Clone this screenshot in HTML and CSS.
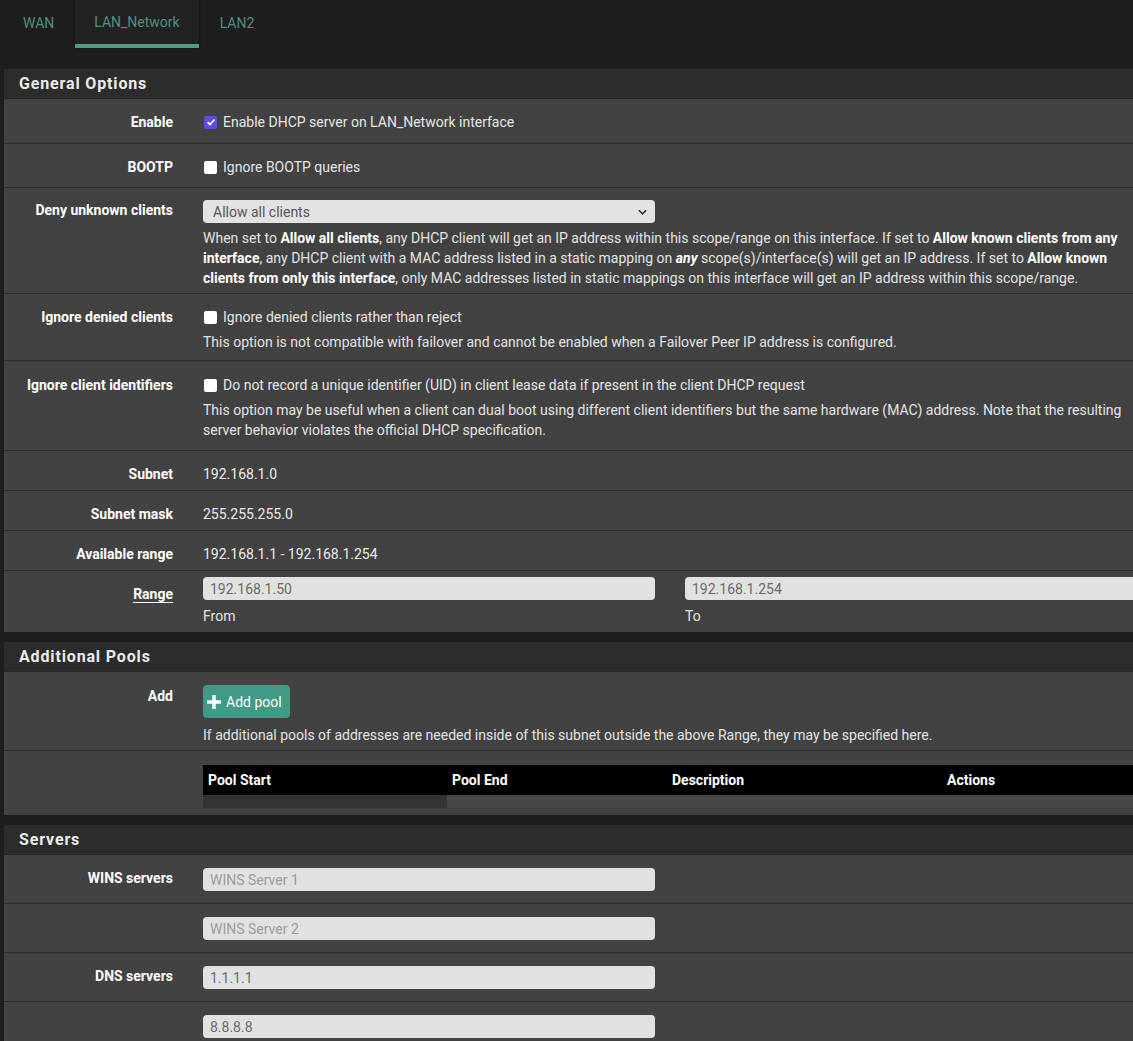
FILE: index.html
```html
<!DOCTYPE html>
<html lang="en">
<head>
<meta charset="utf-8">
<title>DHCP Server</title>
<link rel="stylesheet" href="styles.css">
</head>
<body>
<nav class="tabs">
  <a class="tab">WAN</a>
  <a class="tab active">LAN_Network</a>
  <a class="tab">LAN2</a>
</nav>

<section class="panel first">
  <h2 class="panel-heading">General Options</h2>
  <div class="panel-body">
    <div class="form-row r-enable">
      <div class="form-label">Enable</div>
      <div class="form-content">
        <label class="check"><input type="checkbox" class="cb" checked> Enable DHCP server on LAN_Network interface</label>
      </div>
    </div>
    <div class="form-row r-bootp">
      <div class="form-label">BOOTP</div>
      <div class="form-content">
        <label class="check"><input type="checkbox" class="cb"> Ignore BOOTP queries</label>
      </div>
    </div>
    <div class="form-row r-deny">
      <div class="form-label">Deny unknown clients</div>
      <div class="form-content">
        <select class="select"><option>Allow all clients</option></select>
        <p class="help">When set to <b>Allow all clients</b>, any DHCP client will get an IP address within this scope/range on this interface. If set to <b>Allow known clients from any interface</b>, any DHCP client with a MAC address listed in a static mapping on <b><i>any</i></b> scope(s)/interface(s) will get an IP address. If set to <b>Allow known clients from only this interface</b>, only MAC addresses listed in static mappings on this interface will get an IP address within this scope/range.</p>
      </div>
    </div>
    <div class="form-row r-ign">
      <div class="form-label">Ignore denied clients</div>
      <div class="form-content">
        <label class="check"><input type="checkbox" class="cb"> Ignore denied clients rather than reject</label>
        <p class="help">This option is not compatible with failover and cannot be enabled when a Failover Peer IP address is configured.</p>
      </div>
    </div>
    <div class="form-row r-uid">
      <div class="form-label">Ignore client identifiers</div>
      <div class="form-content">
        <label class="check"><input type="checkbox" class="cb"> Do not record a unique identifier (UID) in client lease data if present in the client DHCP request</label>
        <p class="help">This option may be useful when a client can dual boot using different client identifiers but the same hardware (MAC) address. Note that the resulting server behavior violates the official DHCP specification.</p>
      </div>
    </div>
    <div class="form-row r-static">
      <div class="form-label">Subnet</div>
      <div class="form-content"><span class="static">192.168.1.0</span></div>
    </div>
    <div class="form-row r-static">
      <div class="form-label">Subnet mask</div>
      <div class="form-content"><span class="static">255.255.255.0</span></div>
    </div>
    <div class="form-row r-static">
      <div class="form-label">Available range</div>
      <div class="form-content"><span class="static">192.168.1.1 - 192.168.1.254</span></div>
    </div>
    <div class="form-row r-range">
      <div class="form-label"><span class="underline">Range</span></div>
      <div class="form-content range">
        <div class="range-col">
          <input class="input" type="text" value="192.168.1.50">
          <span class="help sub">From</span>
        </div>
        <div class="range-col">
          <input class="input" type="text" value="192.168.1.254">
          <span class="help sub">To</span>
        </div>
      </div>
    </div>
  </div>
</section>

<section class="panel">
  <h2 class="panel-heading">Additional Pools</h2>
  <div class="panel-body">
    <div class="form-row r-add">
      <div class="form-label">Add</div>
      <div class="form-content">
        <button class="btn" type="button">
          <svg class="plus" width="14" height="14" viewBox="0 0 14 14" aria-hidden="true"><path d="M5.3 0h3.4v5.3H14v3.4H8.7V14H5.3V8.7H0V5.3h5.3z" fill="#fff"/></svg>
          Add pool
        </button>
        <p class="help">If additional pools of addresses are needed inside of this subnet outside the above Range, they may be specified here.</p>
      </div>
    </div>
    <div class="form-row r-table">
      <div class="form-label"></div>
      <div class="form-content">
        <div class="pool-table">
          <div class="th">Pool Start</div>
          <div class="th">Pool End</div>
          <div class="th">Description</div>
          <div class="th">Actions</div>
          <div class="td dark"></div>
          <div class="td"></div>
          <div class="td"></div>
          <div class="td"></div>
        </div>
      </div>
    </div>
  </div>
</section>

<section class="panel">
  <h2 class="panel-heading">Servers</h2>
  <div class="panel-body">
    <div class="form-row r-input">
      <div class="form-label">WINS servers</div>
      <div class="form-content"><input class="input" type="text" placeholder="WINS Server 1"></div>
    </div>
    <div class="form-row r-input">
      <div class="form-label"></div>
      <div class="form-content"><input class="input" type="text" placeholder="WINS Server 2"></div>
    </div>
    <div class="form-row r-input">
      <div class="form-label">DNS servers</div>
      <div class="form-content"><input class="input" type="text" value="1.1.1.1"></div>
    </div>
    <div class="form-row r-input">
      <div class="form-label"></div>
      <div class="form-content"><input class="input" type="text" value="8.8.8.8"></div>
    </div>
  </div>
</section>
</body>
</html>
```

FILE: styles.css
```css
html {
  background: #1e1e1e;
  overflow: hidden;
}
body {
  margin: 0;
  font-family: Roboto, "Liberation Sans", sans-serif;
  font-size: 14px;
  color: #e6e6e6;
  overflow: hidden;
  width: 1133px;
}

/* Tabs */
.tabs {
  display: flex;
  gap: 2px;
  padding-left: 4px;
  height: 48px;
}
.tab {
  display: flex;
  align-items: center;
  padding: 0 19px 3px;
  color: #4f8f80;
  font-size: 14px;
  box-sizing: border-box;
  height: 48px;
  text-decoration: none;
}
.tab.active {
  background: #222222;
  border-bottom: 4px solid #4f9d89;
  padding-bottom: 0;
  box-shadow: 1px 0 2px rgba(0, 0, 0, 0.45), -1px 0 2px rgba(0, 0, 0, 0.3);
}

/* Panels */
.panel {
  width: 1200px;
  margin: 10px 0 0 4px;
  background: #424242;
}
.panel.first {
  margin-top: 21px;
}
.panel-heading {
  margin: 0;
  height: 30px;
  line-height: 30px;
  padding-left: 15px;
  background: #2c2c2c;
  color: #ececec;
  font-size: 16px;
  font-weight: 700;
  letter-spacing: 0.85px;
  border-bottom: 1px solid #262626;
  box-sizing: border-box;
}
.form-row {
  display: flex;
  border-bottom: 1px solid #2b2b2b;
  padding-top: 13px;
  padding-bottom: 7px;
}
.form-row:last-child {
  border-bottom: none;
}
.form-label {
  width: 184px;
  flex: none;
  box-sizing: border-box;
  padding-right: 15px;
  text-align: right;
  font-weight: 700;
  color: #ffffff;
  line-height: 20px;
}
.form-content {
  padding-left: 15px;
  width: 940px;
  line-height: 20px;
}

.r-enable { padding-bottom: 11px; }
.r-bootp { padding-bottom: 10px; }
.r-deny { padding-top: 12px; padding-bottom: 5px; }
.r-deny .form-label { line-height: 18px; padding-top: 1px; }
.r-ign { padding-bottom: 8px; }
.r-uid { padding-top: 14px; padding-bottom: 10px; }
.r-static { padding-bottom: 6px; }
.r-range { padding-top: 6px; padding-bottom: 6px; }
.r-range .form-label { padding-top: 7px; }
.r-add { padding-top: 14px; padding-bottom: 5px; }
.r-add .help { margin-top: 7px; }
.r-table { padding-top: 14px; padding-bottom: 7px; }
.r-input { padding-top: 13px; padding-bottom: 12px; }

.check {
  display: flex;
  align-items: center;
  gap: 6px;
  white-space: nowrap;
}
.cb {
  appearance: none;
  -webkit-appearance: none;
  width: 13px;
  height: 13px;
  margin: 0 0 0 1px;
  background: #ffffff;
  border-radius: 2px;
  flex: none;
}
.cb:checked {
  background: #5a4fe0 url("data:image/svg+xml,%3Csvg xmlns='http://www.w3.org/2000/svg' viewBox='0 0 10 10'%3E%3Cpath d='M1.6 5.2l2.3 2.3 4.6-5' fill='none' stroke='white' stroke-width='1.7'/%3E%3C/svg%3E") center / 10px 10px no-repeat;
}

.help {
  margin: 5px 0 0;
  color: #e4e4e4;
  line-height: 20px;
}
.help b { color: #ffffff; }
.help.sub {
  display: block;
  margin-top: 6px;
}

.select {
  appearance: none;
  -webkit-appearance: none;
  display: block;
  width: 452px;
  height: 23px;
  margin: 0;
  padding: 0 10px;
  border: none;
  border-radius: 4px;
  background: #e2e2e2 url("data:image/svg+xml,%3Csvg xmlns='http://www.w3.org/2000/svg' viewBox='0 0 10 6'%3E%3Cpath d='M1 1l4 4 4-4' fill='none' stroke='%23333' stroke-width='1.8'/%3E%3C/svg%3E") right 8px center / 9px 6px no-repeat;
  font-family: Roboto, "Liberation Sans", sans-serif;
  font-size: 14px;
  color: #555555;
}

.input {
  display: block;
  box-sizing: border-box;
  width: 452px;
  height: 23px;
  margin: 0;
  padding: 0 7px;
  border: none;
  border-radius: 4px;
  background: #e1e1e1;
  font-family: Roboto, "Liberation Sans", sans-serif;
  font-size: 14px;
  color: #6a6a6a;
}
.input::placeholder {
  color: #9c9c9c;
}

.static {
  color: #ececec;
}
.underline {
  text-decoration: underline;
  text-underline-offset: 3px;
}

.range {
  display: flex;
  gap: 30px;
  width: auto;
}
.range-col {
  width: 452px;
}

.btn {
  display: flex;
  align-items: center;
  gap: 5px;
  height: 33px;
  padding: 0 8px 0 4px;
  border: none;
  border-radius: 4px;
  background: #3f9a86;
  color: #ffffff;
  font-family: Roboto, "Liberation Sans", sans-serif;
  font-size: 14px;
  margin-top: -1px;
}
.plus {
  display: block;
}

.pool-table {
  display: grid;
  grid-template-columns: 244px 220px 275px 240px;
}
.th {
  background: #000000;
  height: 30px;
  line-height: 30px;
  padding-left: 5px;
  font-weight: 700;
  color: #ffffff;
}
.td {
  height: 13px;
  background: #464646;
}
.td.dark {
  background: #333333;
}
```
